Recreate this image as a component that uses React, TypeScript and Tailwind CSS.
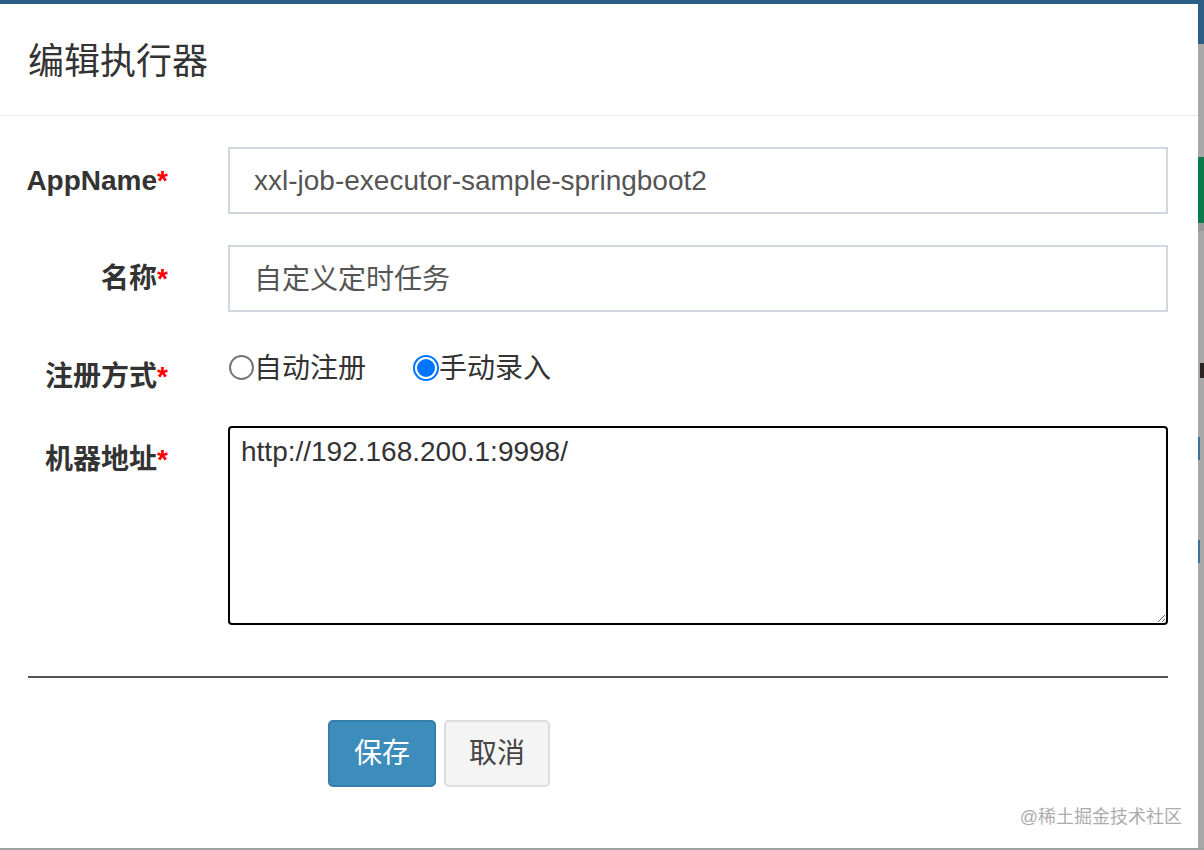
import React from "react";

const Label = ({ text }: { text: string }) => (
  <div className="w-[168px] shrink-0 text-right font-bold text-[28px] leading-[40px] text-[#333]">
    {text}
    <span className="text-[#ff0000]">*</span>
  </div>
);

export default function App() {
  return (
    <div className="w-[1204px] h-[850px] flex flex-col bg-[#a9a9a9] overflow-hidden font-['Liberation_Sans','Noto_Sans_CJK_SC',sans-serif]">
      <div className="flex flex-1">
        <div className="w-[1198px] flex flex-col bg-white relative">
          <div className="h-[4px] bg-[#2d5f86]" />
          <div className="h-[112px] border-b border-[#e9e9e9] flex items-center pl-[28px] pt-[5px]">
            <h4 className="text-[36px] leading-[48px] text-[#333] font-normal">编辑执行器</h4>
          </div>

          {/* Row 1 */}
          <div className="flex items-center mt-[31px]">
            <Label text="AppName" />
            <div className="ml-[60px] w-[940px] h-[67px] border-2 border-[#d2d6de] flex items-center px-[24px] text-[28px] text-[#555]">
              xxl-job-executor-sample-springboot2
            </div>
          </div>

          {/* Row 2 */}
          <div className="flex items-center mt-[31px]">
            <Label text="名称" />
            <div className="ml-[60px] w-[940px] h-[67px] border-2 border-[#d2d6de] flex items-center px-[24px] pt-[2px] text-[28px] text-[#555]">
              自定义定时任务
            </div>
          </div>

          {/* Row 3 */}
          <div className="flex items-start mt-[31px] h-[83px]">
            <div className="mt-[14px]">
              <Label text="注册方式" />
            </div>
            <div className="ml-[61px] mt-[6px] flex items-center text-[28px] leading-[40px] text-[#333]">
              <div className="flex items-center">
                <div className="w-[25px] h-[25px] rounded-full border-2 border-[#767676] -mt-[3px]" />
                <span>自动注册</span>
              </div>
              <div className="flex items-center ml-[47px]">
                <div className="w-[26px] h-[26px] rounded-full border-2 border-[#0075ff] p-[2px] bg-white -mt-[3px]">
                  <div className="w-full h-full rounded-full bg-[#0075ff]" />
                </div>
                <span>手动录入</span>
              </div>
            </div>
          </div>

          {/* Row 4 */}
          <div className="flex items-start">
            <div className="mt-[14px]">
              <Label text="机器地址" />
            </div>
            <textarea
              readOnly
              defaultValue="http://192.168.200.1:9998/"
              className="ml-[60px] w-[940px] h-[199px] border-2 border-black rounded-[4px] pl-[11px] pt-[4px] text-[28px] leading-[40px] text-[#333] outline-none resize-y font-['Liberation_Sans',sans-serif]"
            />
          </div>

          <div className="mx-[28px] w-[1140px] h-[2px] bg-[#555] mt-[51px]" />

          <div className="flex mt-[42px] pl-[328px] gap-[8px]">
            <div className="h-[67px] px-[24px] border-2 border-[#367fa9] bg-[#3c8dbc] rounded-[5px] flex items-center text-white text-[28px]">
              保存
            </div>
            <div className="h-[67px] px-[23px] border-2 border-[#dddddd] bg-[#f4f4f4] rounded-[5px] flex items-center text-[#444] text-[28px]">
              取消
            </div>
          </div>

          <div className="absolute right-[16px] top-[805px] text-[18px] leading-[24px] text-[#acacac]">
            @稀土掘金技术社区
          </div>
        </div>

        <div className="flex-1 flex flex-col">
          <div className="h-[44px] bg-[#2d5f86]" />
          <div className="h-[113px] bg-[#a9a9a9]" />
          <div className="h-[66px] bg-[#0b7b4b]" />
          <div className="h-[8px] bg-[#999]" />
          <div className="h-[132px] bg-[#a9a9a9]" />
          <div className="h-[15px] flex">
            <div className="w-[2px] bg-[#a9a9a9]" />
            <div className="flex-1 bg-[#2a2424]" />
          </div>
          <div className="h-[59px] bg-[#a9a9a9]" />
          <div className="h-[23px] flex">
            <div className="w-[2px] bg-[#3f6f96]" />
            <div className="flex-1 bg-[#a9a9a9]" />
          </div>
          <div className="h-[80px] bg-[#a9a9a9]" />
          <div className="h-[23px] flex">
            <div className="w-[2px] bg-[#3f6f96]" />
            <div className="flex-1 bg-[#a9a9a9]" />
          </div>
          <div className="flex-1 bg-[#a9a9a9]" />
        </div>
      </div>
      <div className="h-[2px] bg-[#a0a0a0]" />
    </div>
  );
}
